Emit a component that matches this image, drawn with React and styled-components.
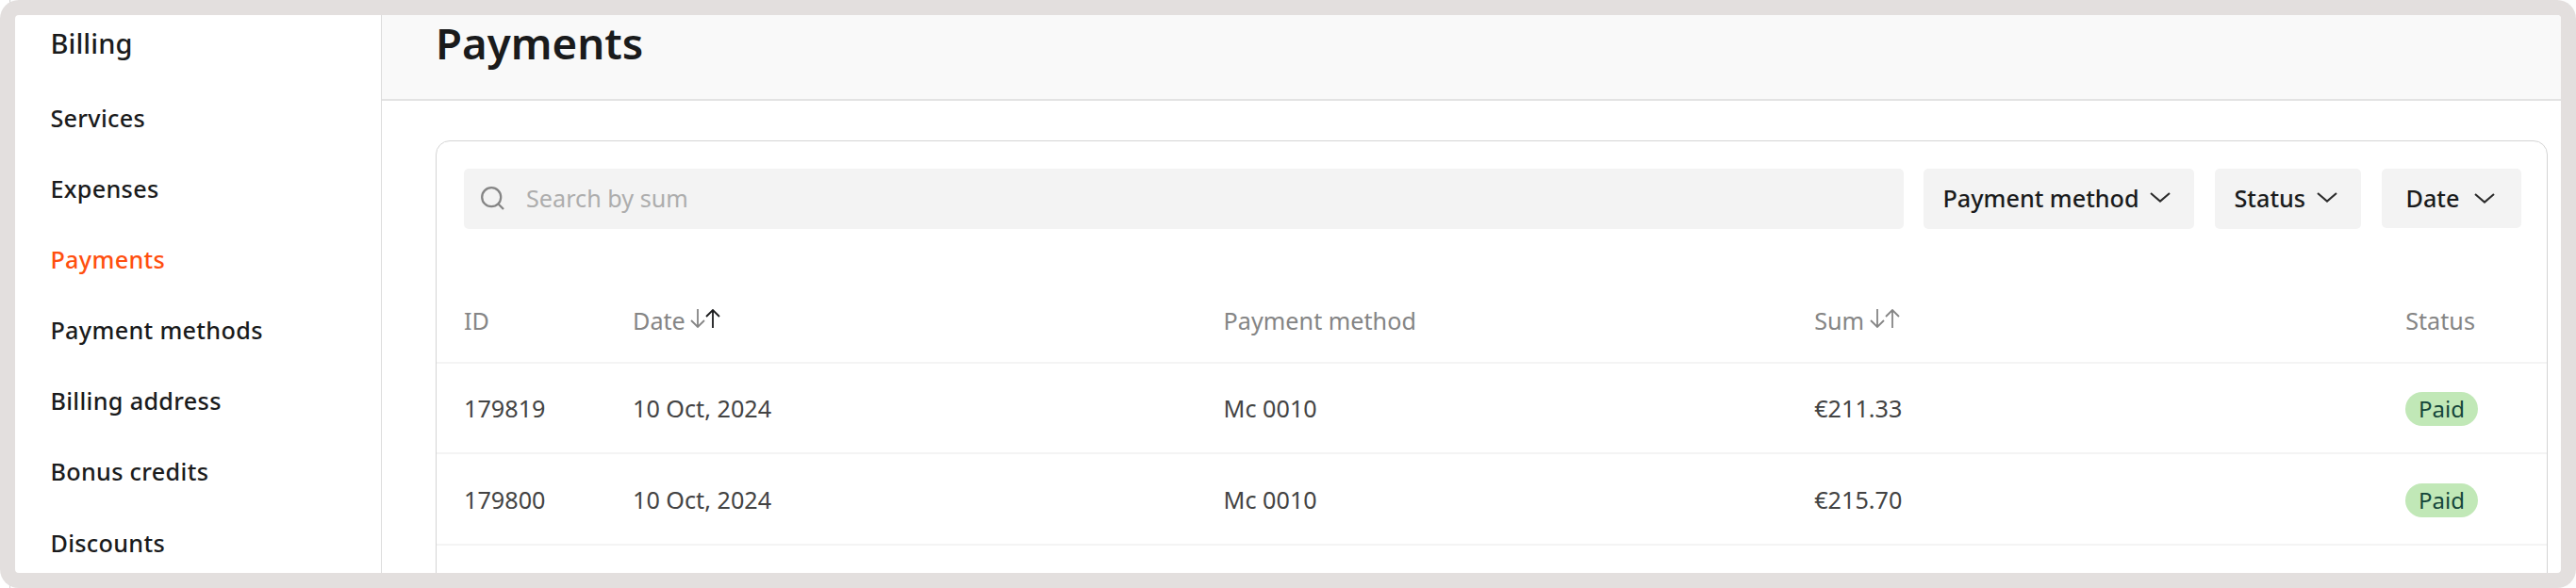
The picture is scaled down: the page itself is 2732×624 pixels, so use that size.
import React from "react";
import styled, { createGlobalStyle } from "styled-components";

const GlobalStyle = createGlobalStyle`
  *, *::before, *::after { box-sizing: border-box; }
  body { margin: 0; background: #fcfcfc; font-family: "Noto Sans", sans-serif; color: #1a1b1c; }
`;

const Backdrop = styled.div`
  width: 2732px;
  height: 624px;
  background: linear-gradient(90deg, #fff 10px, #d4d4d4 10px 11px, #fcfcfc 11px);
`;

const Frame = styled.div`
  height: 100%;
  padding: 16px;
  border-radius: 20px;
  background: #e3dfde;
`;

const Screen = styled.div`
  display: flex;
  height: 592px;
  border-radius: 4px;
  overflow: hidden;
  background: #fff;
`;

const Sidebar = styled.nav`
  flex: none;
  width: 389px;
  padding: 11px 38px 0 37.4px;
  border-right: 1px solid #dcdcdc;
`;

const SidebarTitle = styled.h2`
  margin: 0 0 23px;
  font-size: 29px;
  line-height: 38px;
  font-weight: 500;
  letter-spacing: 0.1px;
`;

const NavItem = styled.a`
  display: block;
  height: 75.1px;
  line-height: 75px;
  font-size: 25.2px;
  font-weight: 500;
  white-space: nowrap;
  letter-spacing: 0.33px;
  color: ${(p) => (p.$active ? "#ff4f0f" : "#1a1b1c")};
`;

const Main = styled.main`
  flex: 1;
  min-width: 0;
`;

const Header = styled.header`
  height: 91px;
  padding: 0 57px;
  background: #f9f9f9;
  border-bottom: 2px solid #e3e3e3;
`;

const Title = styled.h1`
  margin: 0;
  font-size: 45.6px;
  line-height: 58px;
  font-weight: 600;
`;

const Card = styled.section`
  width: 2240px;
  height: 560px;
  margin: 42px 0 0 57px;
  border: 1px solid #d4d4d4;
  border-radius: 15px;
`;

const Toolbar = styled.div`
  display: flex;
  align-items: flex-start;
  padding: 29px 27px 0 29px;
`;

const Search = styled.label`
  display: flex;
  flex: none;
  align-items: center;
  width: 1526.5px;
  height: 63.5px;
  margin-right: 21px;
  padding-left: 18px;
  border-radius: 5px;
  background: #f3f3f3;
`;

const SearchInput = styled.input`
  flex: 1;
  margin: 0 0 2px 23px;
  padding: 0;
  border: 0;
  background: transparent;
  font: 400 25.2px "Noto Sans", sans-serif;
  outline: none;
  &::placeholder { color: #adadad; opacity: 1; }
`;

const FilterButton = styled.button`
  display: flex;
  flex: none;
  align-items: center;
  justify-content: space-between;
  width: ${(p) => p.$width};
  height: ${(p) => p.$height || "63.5px"};
  margin: 0 22px 0 0;
  padding: ${(p) => p.$pad || "0 25px 2px 21px"};
  border: 0;
  border-radius: 5px;
  background: #f3f3f3;
  color: #1a1b1c;
  font: 500 25.2px "Noto Sans", sans-serif;
  white-space: nowrap;
  &:last-child { margin-right: 0; }
`;

const Row = styled.div`
  display: grid;
  grid-template-columns: 179px 626.6px 626.6px 627px 1fr;
  align-items: center;
  height: ${(p) => (p.$head ? "89.5px" : "96.4px")};
  margin-top: ${(p) => (p.$head ? "54px" : "0")};
  padding-left: 29px;
  border-bottom: 2px solid #f4f4f4;
  font-size: 25.2px;
  color: ${(p) => (p.$head ? "#858585" : "#434343")};
`;

const Cell = styled.div`
  display: flex;
  align-items: center;
  white-space: nowrap;
`;

const Badge = styled.span`
  width: 76.5px;
  height: 36px;
  margin-top: 2px;
  line-height: 36px;
  border-radius: 18px;
  background: #c1e8b7;
  color: #14463a;
  font-size: 24px;
  text-align: center;
`;

const SortSvg = styled.svg`
  margin: -4px 0 0 5.5px;
`;

const SearchIcon = () => (
  <svg width="25" height="25" viewBox="0 0 25 25" fill="none" stroke="#858585" strokeWidth="2.3">
    <circle cx="11.2" cy="11.2" r="10" />
    <path d="M18 18l6 6" />
  </svg>
);

const Chevron = () => (
  <svg width="22" height="11" viewBox="0 0 22 11" fill="none" stroke="#2b2b2b" strokeWidth="2.1">
    <path d="M1 1l10 8.6L21 1" />
  </svg>
);

const SortIcon = ({ active }) => (
  <SortSvg width="32" height="20" viewBox="0 0 32 20" fill="none" strokeWidth="1.8">
    <path stroke="#858585" d="M8 0v19M1 12l7 7 7-7" />
    <path stroke={active ? "#1a1b1c" : "#858585"} d="M24 20V1M17 8l7-7 7 7" />
  </SortSvg>
);

const links = ["Services", "Expenses", "Payments", "Payment methods", "Billing address", "Bonus credits", "Discounts"];

const payments = [
  { id: "179819", date: "10 Oct, 2024", method: "Mc 0010", sum: "€211.33", status: "Paid" },
  { id: "179800", date: "10 Oct, 2024", method: "Mc 0010", sum: "€215.70", status: "Paid" },
];

export default function App() {
  return (
    <Backdrop>
      <GlobalStyle />
      <Frame>
        <Screen>
          <Sidebar>
            <SidebarTitle>Billing</SidebarTitle>
            {links.map((l) => (
              <NavItem key={l} $active={l === "Payments"}>{l}</NavItem>
            ))}
          </Sidebar>
          <Main>
            <Header>
              <Title>Payments</Title>
            </Header>
            <Card>
              <Toolbar>
                <Search>
                  <SearchIcon />
                  <SearchInput placeholder="Search by sum" />
                </Search>
                <FilterButton $width="287px">Payment method<Chevron /></FilterButton>
                <FilterButton $width="155px">Status<Chevron /></FilterButton>
                <FilterButton $width="148px" $height="62.5px" $pad="0 28px 0 26px">Date<Chevron /></FilterButton>
              </Toolbar>
              <Row $head>
                <Cell>ID</Cell>
                <Cell>Date<SortIcon active /></Cell>
                <Cell>Payment method</Cell>
                <Cell>Sum<SortIcon /></Cell>
                <Cell>Status</Cell>
              </Row>
              {payments.map((p) => (
                <Row key={p.id}>
                  <Cell>{p.id}</Cell>
                  <Cell>{p.date}</Cell>
                  <Cell>{p.method}</Cell>
                  <Cell>{p.sum}</Cell>
                  <Cell><Badge>{p.status}</Badge></Cell>
                </Row>
              ))}
            </Card>
          </Main>
        </Screen>
      </Frame>
    </Backdrop>
  );
}
